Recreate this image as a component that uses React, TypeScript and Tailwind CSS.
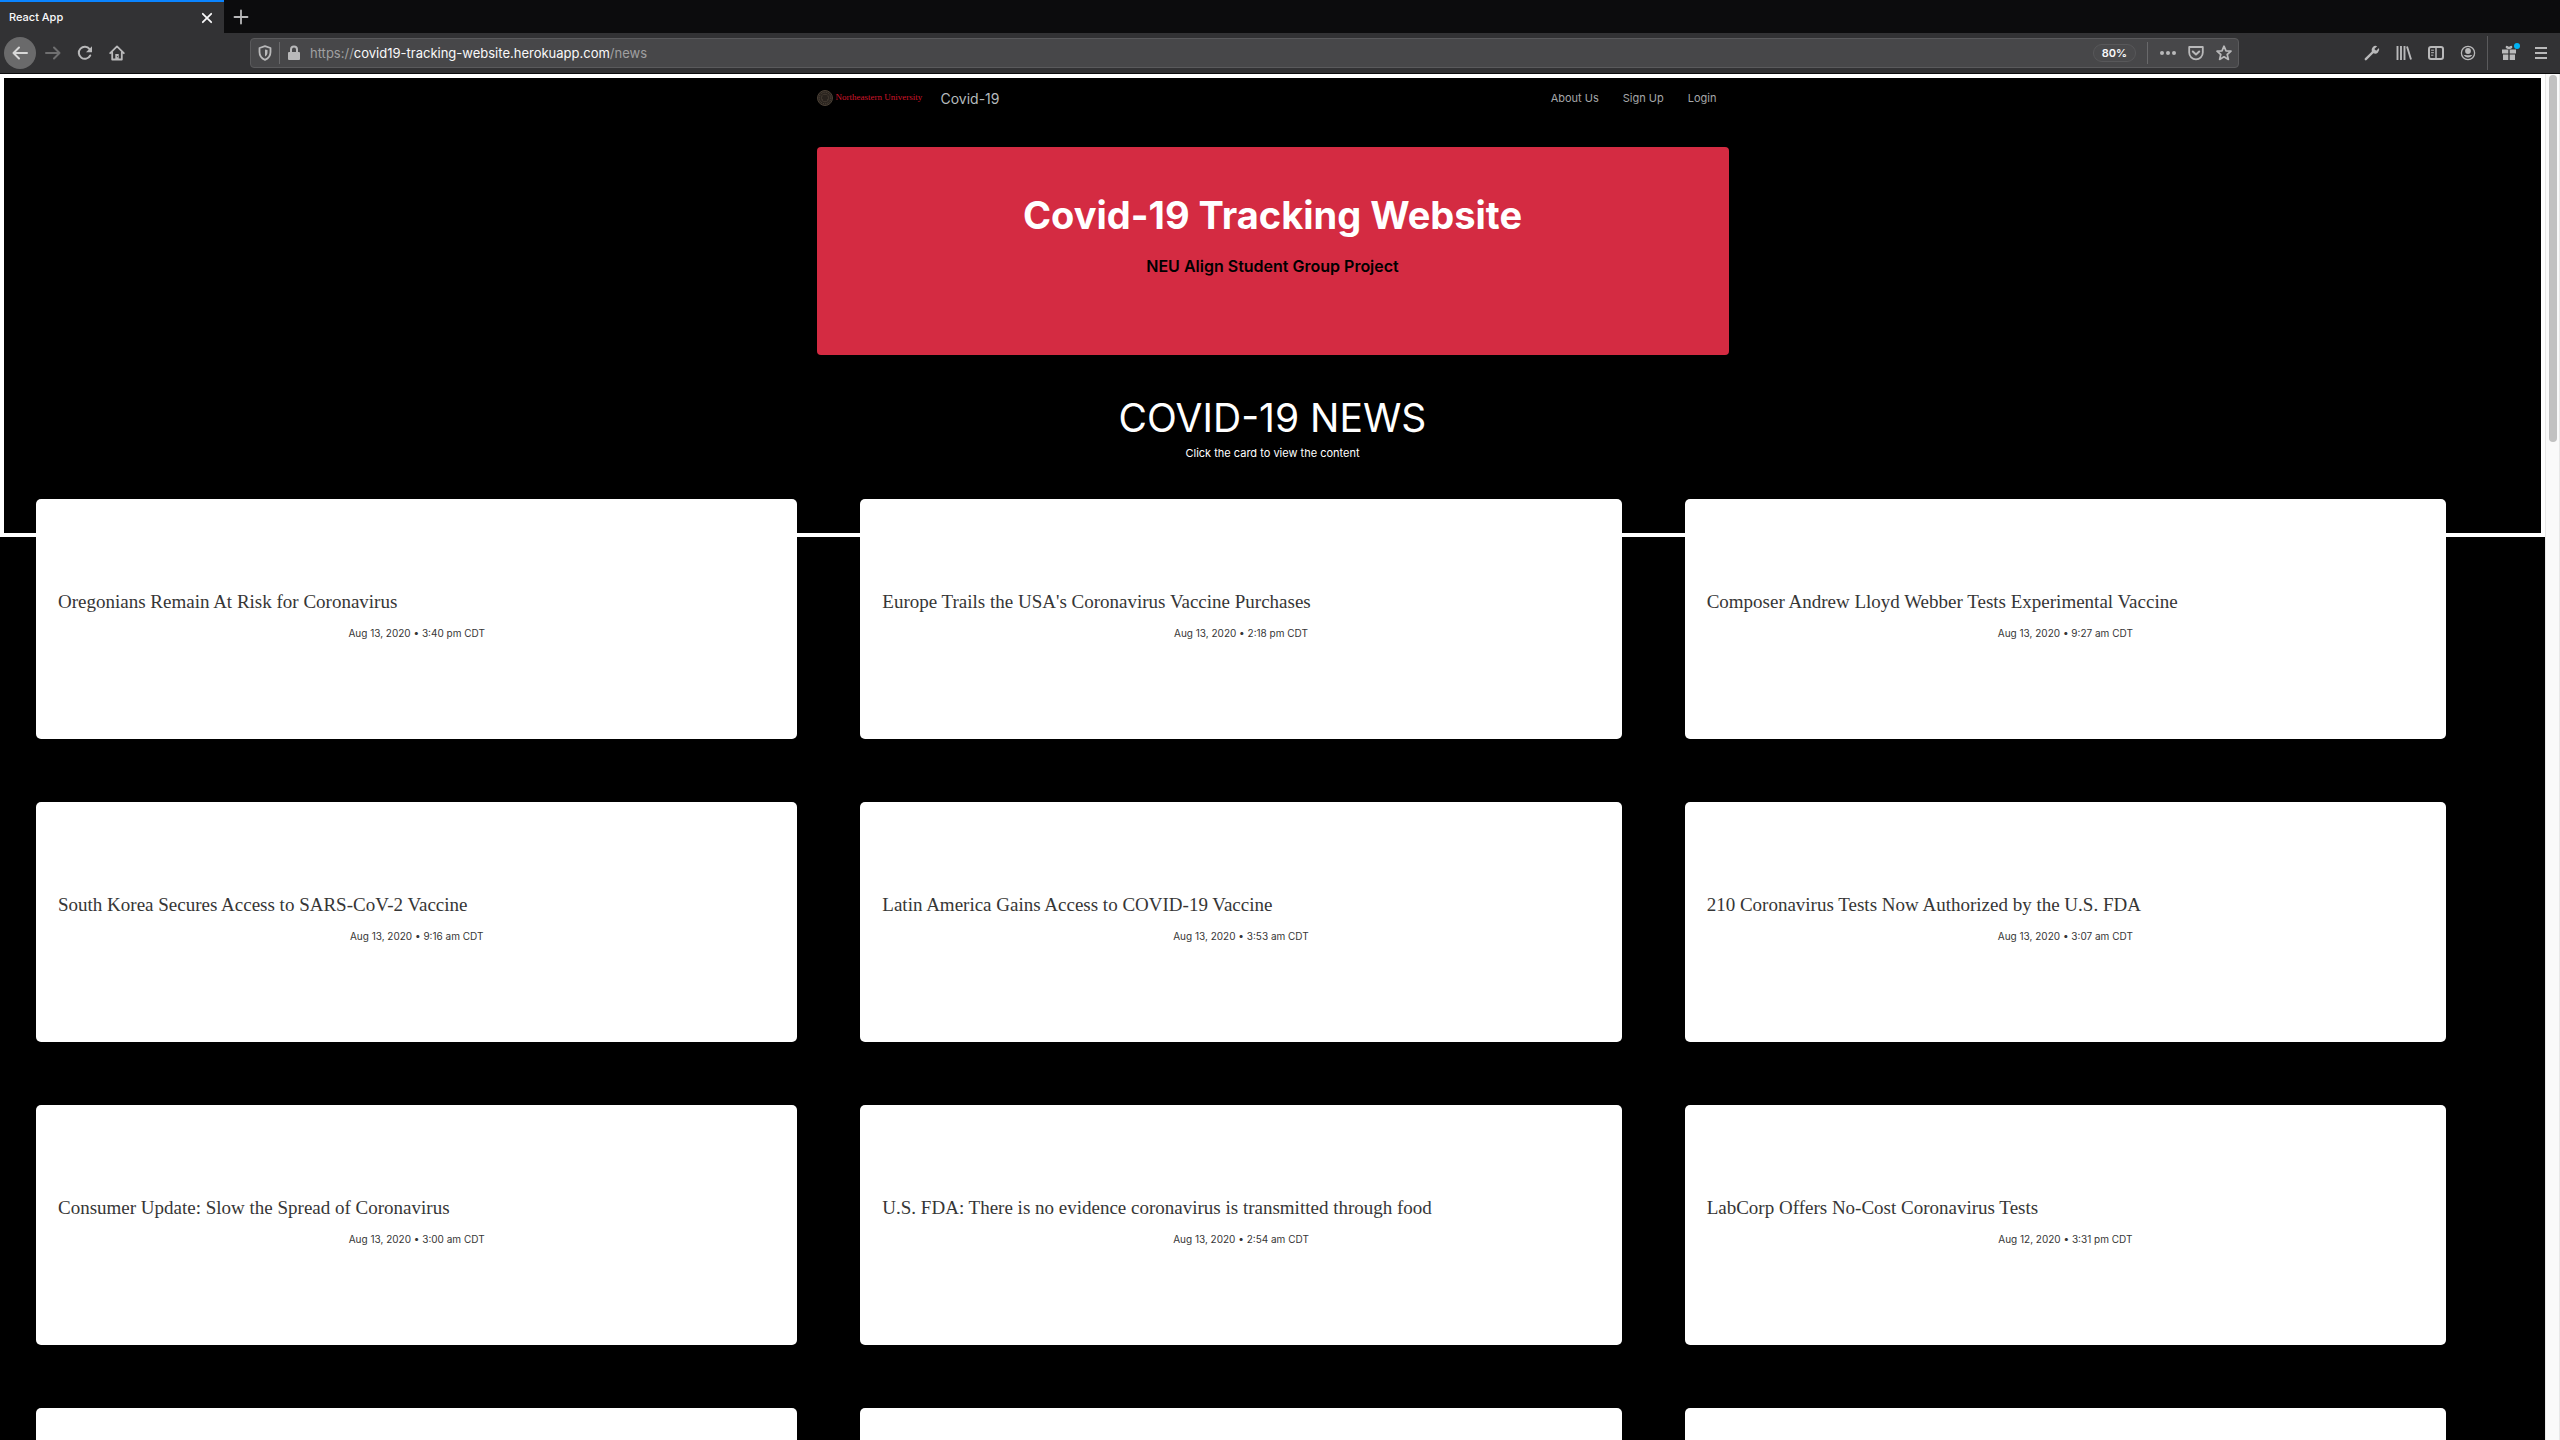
import React from "react";

const news = [
  ["Oregonians Remain At Risk for Coronavirus", "Aug 13, 2020 • 3:40 pm CDT"],
  ["Europe Trails the USA's Coronavirus Vaccine Purchases", "Aug 13, 2020 • 2:18 pm CDT"],
  ["Composer Andrew Lloyd Webber Tests Experimental Vaccine", "Aug 13, 2020 • 9:27 am CDT"],
  ["South Korea Secures Access to SARS-CoV-2 Vaccine", "Aug 13, 2020 • 9:16 am CDT"],
  ["Latin America Gains Access to COVID-19 Vaccine", "Aug 13, 2020 • 3:53 am CDT"],
  ["210 Coronavirus Tests Now Authorized by the U.S. FDA", "Aug 13, 2020 • 3:07 am CDT"],
  ["Consumer Update: Slow the Spread of Coronavirus", "Aug 13, 2020 • 3:00 am CDT"],
  ["U.S. FDA: There is no evidence coronavirus is transmitted through food", "Aug 13, 2020 • 2:54 am CDT"],
  ["LabCorp Offers No-Cost Coronavirus Tests", "Aug 12, 2020 • 3:31 pm CDT"],
  ["", ""],
  ["", ""],
  ["", ""],
];

type IconProps = { children: React.ReactNode; className?: string };

function Icon({ children, className = "size-4" }: IconProps) {
  return (
    <svg
      viewBox="0 0 16 16"
      className={className}
      fill="none"
      stroke="currentColor"
      strokeWidth="2"
      strokeLinecap="round"
      strokeLinejoin="round"
      aria-hidden="true"
    >
      {children}
    </svg>
  );
}

function ToolButton({ label, children, className = "" }: { label: string; children: React.ReactNode; className?: string }) {
  return (
    <button type="button" aria-label={label} className={"relative flex size-8 shrink-0 items-center justify-center " + className}>
      {children}
    </button>
  );
}

function TabStrip() {
  return (
    <div className="flex h-[33px] bg-[#0c0c0d]">
      <div className="flex w-56 items-center justify-between border-t-2 border-[#0a84ff] bg-[#323234] pr-[7px] pl-[9px]">
        <span className="text-[11px] font-medium text-[#f9f9fa]">React App</span>
        <button type="button" aria-label="Close tab" className="flex size-5 items-center justify-center text-[#f9f9fa]">
          <Icon className="size-[14px]">
            <path d="M3.2 3.2l9.6 9.6M12.8 3.200l-9.600 9.600" />
          </Icon>
        </button>
      </div>
      <button type="button" aria-label="New tab" className="flex w-[34px] items-center justify-center text-[#b9b9ba]">
        <Icon>
          <path d="M8 1.5v13M1.5 8h13" strokeWidth="1.8" />
        </Icon>
      </button>
    </div>
  );
}

function Toolbar() {
  return (
    <div className="flex h-[41px] items-center border-b border-[#0c0c0d] bg-[#323234] text-[#b9b9ba]">
      <div className="flex w-[250px] shrink-0 items-center pl-1">
        <ToolButton label="Back" className="rounded-full bg-[#6a6a6b] text-[#d8d8d8]">
          <Icon>
            <path d="M15 8H1.5M7 2.5L1.5 8 7 13.5" />
          </Icon>
        </ToolButton>
        <ToolButton label="Forward" className="ml-px text-[#6f6f70]">
          <Icon>
            <path d="M1 8h13.5M9 2.5L14.5 8 9 13.5" />
          </Icon>
        </ToolButton>
        <ToolButton label="Reload">
          <Icon>
            <path d="M13.200 10.500A6 6 0 1 1 12.600 4.200" />
            <path d="M15 1.200v6h-6z" fill="currentColor" stroke="none" />
          </Icon>
        </ToolButton>
        <ToolButton label="Home">
          <Icon>
            <path d="M1.200 8.200L8 1.400l6.800 6.800M3.200 7.500v7h9.600v-7" strokeWidth="1.800" />
            <path d="M8 9v5" strokeWidth="3.400" strokeLinecap="butt" />
            <path d="M8.400 11.200v1" stroke="#323234" strokeWidth="1" strokeLinecap="butt" />
          </Icon>
        </ToolButton>
      </div>
      <div className="flex h-[30px] max-w-[1989px] grow items-center rounded border border-[#5a5a5c] bg-[#474749] pl-[6px]">
        <Icon>
          <path d="M8 1.200L2.500 3v4c0 4 2.400 6.500 5.500 7.800C11.100 13.500 13.500 11 13.500 7V3z" strokeWidth="1.800" />
          <path d="M8 4.500v7c1.800-1 2.500-2.500 2.500-4.500V5z" fill="currentColor" stroke="none" />
        </Icon>
        <span className="mx-[6px] h-[22px] w-px bg-[#69696b]" />
        <Icon>
          <path d="M5 7V4.500a3 3 0 0 1 6 0V7" />
          <rect x="2" y="7" width="12" height="8" rx="1" fill="currentColor" stroke="none" />
        </Icon>
        <div className="relative ml-2 h-5 grow text-[13px] leading-5">
          <input
            type="text"
            aria-label="Address"
            className="absolute inset-0 w-full bg-transparent outline-none"
          />
          <span className="pointer-events-none relative text-[#a0a0a1]">
            https://<span className="text-[#f9f9fa]">covid19-tracking-website.herokuapp.com</span>/news
          </span>
        </div>
        <button type="button" className="flex h-4 w-[41px] items-center justify-center rounded-full bg-[#4a4a4c] text-[11px] font-semibold text-[#f9f9fa] outline outline-[#58585a]">
          80%
        </button>
        <span className="mr-[6px] ml-3 h-[22px] w-px bg-[#69696b]" />
        <button type="button" aria-label="Page actions" className="flex w-7 justify-center">
          <Icon>
            <g fill="currentColor" stroke="none">
              <circle cx="2" cy="8" r="2" />
              <circle cx="8" cy="8" r="2" />
              <circle cx="14" cy="8" r="2" />
            </g>
          </Icon>
        </button>
        <button type="button" aria-label="Save to Pocket" className="flex w-7 justify-center">
          <Icon>
            <path d="M1.200 2h13.600v5.500a6.800 6.800 0 0 1-13.600 0z" strokeWidth="1.800" />
            <path d="M4.800 6.500L8 9.500l3.200-3" />
          </Icon>
        </button>
        <button type="button" aria-label="Bookmark" className="flex w-7 justify-center">
          <Icon>
            <path d="M8 1.200l2 4.600 5 .4-3.800 3.300 1.200 4.900L8 11.800l-4.400 2.600 1.200-4.900L1 6.200l5-.4z" strokeWidth="1.700" />
          </Icon>
        </button>
      </div>
      <div className="ml-auto flex items-center pr-[3px]">
        <ToolButton label="Developer tools">
          <Icon>
            <path d="M1.800 14.200L9 7" strokeWidth="2.400" />
            <path d="M13.200 1.200a4.200 4.200 0 0 0-5.400 5.500l1.700 1.600a4.200 4.200 0 0 0 5.500-5.300L12.200 5.800 10.300 3.900z" fill="currentColor" stroke="none" />
          </Icon>
        </ToolButton>
        <ToolButton label="Library">
          <Icon>
            <path d="M1.500 1v14M5 1v14M8.500 1v14M11 1.500l4 13" strokeWidth="1.900" strokeLinecap="butt" />
          </Icon>
        </ToolButton>
        <ToolButton label="Sidebars">
          <Icon>
            <rect x="1" y="2" width="14" height="12" rx="2" />
            <path d="M8 2v12" strokeWidth="1.500" />
            <path d="M3.500 5.200h2M3.500 7.700h2M3.500 10.200h1.500" strokeWidth="1" />
          </Icon>
        </ToolButton>
        <ToolButton label="Account">
          <Icon>
            <circle cx="8" cy="8" r="6.600" strokeWidth="1.300" />
            <circle cx="8" cy="6" r="2.900" fill="currentColor" stroke="none" />
            <path d="M3.500 9.800c1.500.6 7.500.6 9 0a5.200 5.200 0 0 1-9 0z" fill="currentColor" stroke="none" />
          </Icon>
        </ToolButton>
        <span className="mr-[5px] ml-[3px] h-[34px] w-px bg-[#5a5a5c]" />
        <ToolButton label="What's new">
          <Icon>
            <g fill="currentColor" stroke="none">
              <rect x="1" y="4.500" width="6.300" height="4" />
              <rect x="8.700" y="4.500" width="6.300" height="4" />
              <rect x="2" y="9.500" width="5.300" height="5.500" />
              <rect x="8.700" y="9.500" width="5.300" height="5.500" />
            </g>
            <path d="M7.500 3.500C6 3.500 5 2.500 5.500 1.500c1 0 2 .8 2.500 1.500.5-.7 1.500-1.500 2.500-1.500.5 1-.5 2-2 2" strokeWidth="1.400" />
          </Icon>
          <span className="absolute top-[6px] right-[5px] size-[6px] rounded-full bg-[#00b3f4]" />
        </ToolButton>
        <ToolButton label="Menu">
          <Icon>
            <path d="M2 3h12M2 8h12M2 13h12" strokeLinecap="butt" />
          </Icon>
        </ToolButton>
      </div>
    </div>
  );
}

function UniversityLogo() {
  return (
    <span className="flex items-center gap-[3px]">
      <svg viewBox="0 0 16 16" className="size-4 shrink-0" aria-hidden="true">
        <circle cx="8" cy="8" r="7.500" fill="#2a241f" stroke="#4c4237" strokeWidth="1" />
        <circle cx="8" cy="8" r="5.800" fill="none" stroke="#54493d" strokeWidth="1" strokeDasharray="1 1" />
        <circle cx="8" cy="8" r="4.200" fill="#3d352d" />
        <path d="M5.500 6h5M5 8h6M6 10h4" stroke="#15110e" strokeWidth="1" />
      </svg>
      <span className="min-w-[93px] font-['Liberation_Serif',serif] text-[9px] whitespace-nowrap text-[#d0142a]">
        Northeastern University
      </span>
    </span>
  );
}

function NewsCard({ title, date }: { title: string; date: string }) {
  return (
    <article className="h-60 rounded-[5px] bg-white px-[22px] pt-[88px] text-[#363636]">
      <h2 className="font-['Liberation_Serif',serif] text-[19px] leading-[30px]">{title}</h2>
      <p className="mt-2 text-center text-[10px] leading-4">{date}</p>
    </article>
  );
}

export default function App() {
  return (
    <div className="flex h-screen flex-col overflow-hidden bg-black font-['Inter',sans-serif]">
      <header>
        <TabStrip />
        <Toolbar />
      </header>
      <div className="flex min-h-0 grow">
        <main className="min-w-0 grow overflow-hidden">
          <section className="h-[463px] border-4 border-white">
            <div className="mx-auto w-[912px] max-w-full">
              <nav className="flex h-10 items-center justify-between">
                <a href="#home" className="flex items-center gap-3 text-[14px] text-[#b5babd]">
                  <UniversityLogo />
                  Covid-19
                </a>
                <div className="flex gap-6 pr-3 text-[11px] text-[#a5a7a9]">
                  <a href="#about">About Us</a>
                  <a href="#signup">Sign Up</a>
                  <a href="#login">Login</a>
                </div>
              </nav>
              <div className="mt-[29px] h-[208px] rounded bg-[#d42b42] pt-11 text-center">
                <h1 className="text-[38px] leading-[48px] font-bold text-white">Covid-19 Tracking Website</h1>
                <p className="mt-[15px] text-[16px] leading-6 font-semibold text-black">NEU Align Student Group Project</p>
              </div>
              <div className="mt-10 text-center text-white">
                <h2 className="text-[39px] leading-[46px]">COVID-19 NEWS</h2>
                <p className="pt-[2px] text-[11px] leading-5">Click the card to view the content</p>
              </div>
            </div>
          </section>
          <section className="-mt-[38px] grid grid-cols-3 gap-[63px] pr-[99px] pl-9">
            {news.map(([title, date], index) => (
              <NewsCard key={index} title={title} date={date} />
            ))}
          </section>
        </main>
        <div className="w-[15px] shrink-0 border-x border-[#e8e8e8] bg-[#fafafa] px-[3px] pt-px">
          <div className="h-[367px] w-2 rounded-full bg-[#c1c1c1]" />
        </div>
      </div>
    </div>
  );
}
